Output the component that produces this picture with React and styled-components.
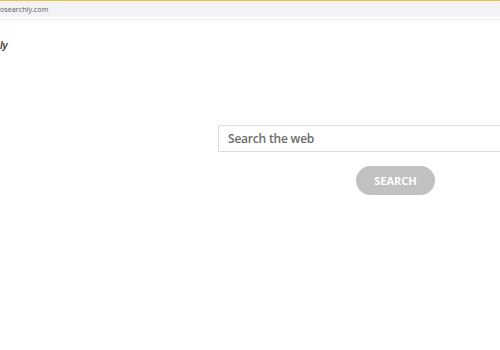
import React from "react";
import styled, { createGlobalStyle } from "styled-components";

const Global = createGlobalStyle`
  html, body { margin: 0; padding: 0; background: #ffffff; }
  body { font-family: "Open Sans", "Liberation Sans", sans-serif; overflow: hidden; }
`;

const Page = styled.div`
  width: 500px;
  height: 350px;
  display: flex;
  flex-direction: column;
  background: #fff;
  overflow: hidden;
`;

const AddressBar = styled.div`
  height: 16px;
  border-top: 1px solid #f2bd3a;
  background: #f1f3f4;
  display: flex;
  align-items: center;
  border-bottom: 2px solid #ffffff;
  box-shadow: 0 1px 0 #eef0f1;
`;

const Url = styled.span`
  font-family: "Open Sans", "Liberation Sans", sans-serif;
  font-size: 7.2px;
  color: #5a5a5a;
  margin-left: 0;
`;

const Header = styled.div`
  padding: 13px 0 0 0;
  height: 20px;
`;

const Logo = styled.span`
  font-family: "Liberation Sans", sans-serif;
  font-style: italic;
  font-weight: 700;
  font-size: 10px;
  color: #444;
  letter-spacing: -0.5px;
`;

const Main = styled.main`
  padding: 73px 0 0 218px;
  display: flex;
  flex-direction: column;
`;

const Input = styled.div`
  width: 300px;
  height: 25px;
  border: 1px solid #dcdcdc;
  border-right: none;
  display: flex;
  align-items: center;
  padding-left: 9px;
  font-family: "Open Sans", sans-serif;
  font-weight: 600;
  font-size: 12px;
  letter-spacing: -0.2px;
  color: #6b6b6b;
`;

const Button = styled.button`
  margin: 14px 0 0 138px;
  width: 79px;
  height: 29px;
  border: none;
  border-radius: 15px;
  background: #c1c1c1;
  color: #fff;
  font-family: "Open Sans", sans-serif;
  font-weight: 700;
  font-size: 11px;
  padding: 0;
  cursor: pointer;
`;

export default function App() {
  return (
    <>
      <Global />
      <Page>
        <AddressBar>
          <Url>osearchly.com</Url>
        </AddressBar>
        <Header>
          <Logo>ly</Logo>
        </Header>
        <Main>
          <Input>Search the web</Input>
          <Button>SEARCH</Button>
        </Main>
      </Page>
    </>
  );
}
